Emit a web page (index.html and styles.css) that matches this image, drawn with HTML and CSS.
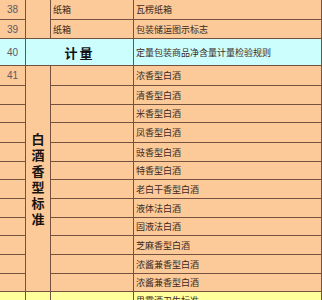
FILE: index.html
```html
<!DOCTYPE html>
<html lang="zh">
<head>
<meta charset="utf-8">
<link rel="stylesheet" href="styles.css">
</head>
<body>
<div class="sheet">
  <div class="c num peach r1">38</div>
  <div class="c peach blank12"></div>
  <div class="c txt peach">纸箱</div>
  <div class="c txt peach">瓦楞纸箱</div>

  <div class="c num peach">39</div>
  <div class="c txt peach">纸箱</div>
  <div class="c txt peach">包装储运图示标志</div>

  <div class="c num cyan">40</div>
  <div class="c head cyan">计量</div>
  <div class="c txt cyan">定量包装商品净含量计量检验规则</div>

  <div class="c num peach">41</div>
  <div class="c vert peach"><span>白</span><span>酒</span><span>香</span><span>型</span><span>标</span><span>准</span></div>
  <div class="c peach"></div>
  <div class="c txt peach">浓香型白酒</div>

  <div class="c peach"></div><div class="c peach"></div><div class="c txt peach">清香型白酒</div>
  <div class="c peach"></div><div class="c peach"></div><div class="c txt peach">米香型白酒</div>
  <div class="c peach"></div><div class="c peach"></div><div class="c txt peach">凤香型白酒</div>
  <div class="c peach"></div><div class="c peach"></div><div class="c txt peach">豉香型白酒</div>
  <div class="c peach"></div><div class="c peach"></div><div class="c txt peach">特香型白酒</div>
  <div class="c peach"></div><div class="c peach"></div><div class="c txt peach">老白干香型白酒</div>
  <div class="c peach"></div><div class="c peach"></div><div class="c txt peach">液体法白酒</div>
  <div class="c peach"></div><div class="c peach"></div><div class="c txt peach">固液法白酒</div>
  <div class="c peach"></div><div class="c peach"></div><div class="c txt peach">芝麻香型白酒</div>
  <div class="c peach"></div><div class="c peach"></div><div class="c txt peach">浓酱兼香型白酒</div>
  <div class="c peach"></div><div class="c peach"></div><div class="c txt peach">浓酱兼香型白酒</div>

  <div class="c yellow"></div><div class="c yellow"></div><div class="c yellow"></div><div class="c txt yellow lastrow">果露酒卫生标准</div>
</div>
</body>
</html>
```
FILE: styles.css
```css
html, body {
  margin: 0;
  padding: 0;
  background: #ffffff;
  overflow: hidden;
}

.sheet {
  display: grid;
  grid-template-columns: 25px 24px 82px 187px;
  grid-template-rows: 19px 18px 26px 19px 18px 17px 19px 18px 17px 18px 18px 17px 18px 18px 17px 18px;
  gap: 1px;
  background: #74523f;
  padding-right: 1px;
  width: 321px;
  font-family: "Noto Sans CJK SC", sans-serif;
  color: #3a2a1e;
}

.c {
  display: flex;
  align-items: center;
  overflow: hidden;
  white-space: nowrap;
}

.peach { background: #fcc998; }
.cyan { background: #ccfefe; }
.yellow { background: #ffff9c; }

.num {
  justify-content: center;
  font-family: "Liberation Sans", sans-serif;
  font-size: 10px;
  color: #5a5a66;
}

.txt {
  padding-left: 2px;
  font-size: 9px;
  line-height: 1;
}

.lastrow {
  align-items: flex-start;
  padding-top: 4px;
}

.blank12 {
  grid-row: 1 / span 2;
  grid-column: 2;
}

.head {
  grid-column: 2 / span 2;
  justify-content: center;
  font-size: 13px;
  font-weight: bold;
  color: #111111;
  letter-spacing: 2px;
}

.vert {
  grid-row: 4 / span 12;
  grid-column: 2;
  flex-direction: column;
  justify-content: center;
  font-size: 13px;
  font-weight: bold;
  line-height: 16px;
  color: #1a1410;
}
```
